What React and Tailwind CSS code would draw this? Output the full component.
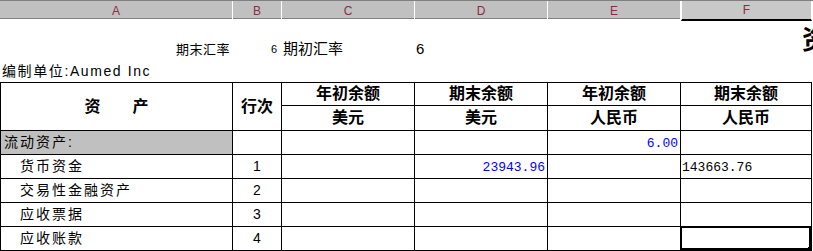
const cols = "grid grid-cols-[233px_49px_133px_133px_133px_131px_1fr]";
const tableCols = "grid grid-cols-[232px_49px_133px_133px_133px_131px]";
const cjk = "font-['Liberation_Sans','Noto_Sans_CJK_SC',sans-serif]";
const mono = "font-['Liberation_Mono','Noto_Sans_CJK_SC',monospace]";

const cell = "border-r border-b border-black flex items-center";

const rows = [
  { name: "货币资金", no: "1", d: "23943.96", f: "143663.76" },
  { name: "交易性金融资产", no: "2" },
  { name: "应收票据", no: "3" },
  { name: "应收账款", no: "4", selected: true },
];

function ColumnHeader() {
  const letters = ["A", "B", "C", "D", "E", "F", ""];
  return (
    <div
      className={`${cols} h-[19px] bg-[#c0c0c0] border-t border-b border-[#808080]`}
    >
      {letters.map((l, i) => (
        <div
          key={i}
          className={`flex items-center justify-center text-[12px] text-[#8a2d44] font-['Liberation_Sans',sans-serif] border-r border-white ${
            l === "F" ? "border-l border-l-white border-b-2 border-b-black bg-[#c8c8c8]" : ""
          }`}
        >
          {l}
        </div>
      ))}
    </div>
  );
}

export default function App() {
  return (
    <div className={`w-[813px] h-[251px] overflow-hidden bg-white text-black ${cjk}`}>
      <ColumnHeader />

      {/* title block above the table */}
      <div className={`${cols} grid-rows-[20px_21px]`}>
        <div className="col-start-6 col-span-2 row-span-2 flex items-center pl-[121px] whitespace-nowrap text-[26px] font-bold leading-none">
          资产负债表
        </div>
        <div className="col-start-1 row-start-2 flex items-center justify-end pr-[3px] text-[13px] tracking-[0.5px]">
          期末汇率
        </div>
        <div className="col-start-2 row-start-2 flex items-center justify-end pr-[5px] text-[11px]">
          6
        </div>
        <div className="col-start-3 row-start-2 flex items-center pl-[1px] text-[15px]">
          期初汇率
        </div>
        <div className="col-start-4 row-start-2 flex items-center pl-[1px] text-[15px]">
          6
        </div>
      </div>
      <div className="h-[22px] flex items-center pl-[2px] text-[14px] tracking-[1.6px] whitespace-nowrap">
        编制单位:Aumed Inc
      </div>

      {/* balance sheet table */}
      <div
        className={`${tableCols} grid-rows-[23px_25px_repeat(6,24px)] border-t border-l border-black w-[812px]`}
      >
        <div className={`${cell} row-span-2 justify-center text-[16px] font-bold whitespace-pre`}>
          资{"　　"}产
        </div>
        <div className={`${cell} row-span-2 justify-center text-[16px] font-bold`}>行次</div>
        <div className={`${cell} justify-center text-[16px] font-bold`}>年初余额</div>
        <div className={`${cell} justify-center text-[16px] font-bold`}>期末余额</div>
        <div className={`${cell} justify-center text-[16px] font-bold`}>年初余额</div>
        <div className={`${cell} justify-center text-[16px] font-bold`}>期末余额</div>
        <div className={`${cell} justify-center text-[16px] font-bold`}>美元</div>
        <div className={`${cell} justify-center text-[16px] font-bold`}>美元</div>
        <div className={`${cell} justify-center text-[16px] font-bold`}>人民币</div>
        <div className={`${cell} justify-center text-[16px] font-bold`}>人民币</div>

        <div className={`${cell} bg-[#c0c0c0] pl-[3px] text-[14px] tracking-[2px]`}>流动资产:</div>
        <div className={cell} />
        <div className={cell} />
        <div className={cell} />
        <div className={`${cell} !items-end justify-end pr-[2px] pb-[1px] text-[13px] text-[#0000ff] ${mono}`}>
          6.00
        </div>
        <div className={cell} />

        {rows.map((r) => (
          <div key={r.no} className="contents">
            <div className={`${cell} pl-[19px] text-[14px] tracking-[2px] whitespace-nowrap`}>
              {r.name}
            </div>
            <div className={`${cell} justify-center text-[14px] font-['Liberation_Sans',sans-serif]`}>
              {r.no}
            </div>
            <div className={cell} />
            <div className={`${cell} justify-end pr-[2px] pt-[2px] text-[13px] text-[#0000ff] ${mono}`}>
              {r.d}
            </div>
            <div className={cell} />
            <div className={`${cell} relative pl-[1px] pt-[2px] text-[13px] ${mono}`}>
              {r.f}
              {r.selected && (
                <div className="absolute -left-px -top-px -right-px -bottom-px border-t-2 border-l-2 border-r-[3px] border-b-[3px] border-black shadow-[inset_1px_1px_0_#fff]">
                  <div className="absolute -right-[3px] -bottom-[3px] w-[4px] h-[4px] bg-black" />
                </div>
              )}
            </div>
          </div>
        ))}

        {[0, 1, 2, 3, 4, 5].map((i) => (
          <div key={i} className={cell} />
        ))}
      </div>
    </div>
  );
}
